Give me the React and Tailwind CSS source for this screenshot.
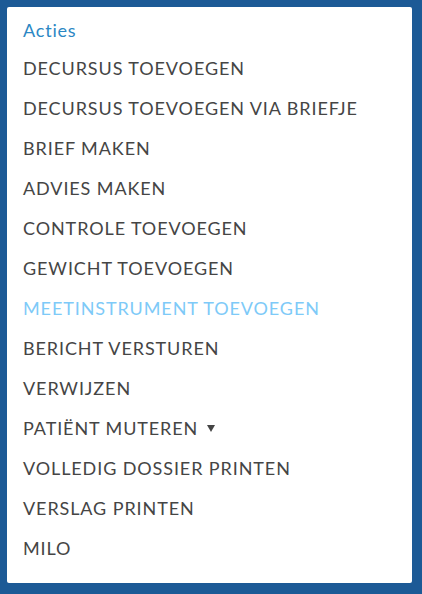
const items = [
  "DECURSUS TOEVOEGEN",
  "DECURSUS TOEVOEGEN VIA BRIEFJE",
  "BRIEF MAKEN",
  "ADVIES MAKEN",
  "CONTROLE TOEVOEGEN",
  "GEWICHT TOEVOEGEN",
  "MEETINSTRUMENT TOEVOEGEN",
  "BERICHT VERSTUREN",
  "VERWIJZEN",
  "PATIËNT MUTEREN",
  "VOLLEDIG DOSSIER PRINTEN",
  "VERSLAG PRINTEN",
  "MILO",
];

export default function App() {
  return (
    <div className="w-[422px] h-[594px] bg-[#1c5a96] pt-[7px] pl-[7px] font-['Lato',sans-serif]">
      <div className="w-[405px] h-[576px] bg-white rounded-[2px] pt-[11px] pl-[16px]">
        <div className="h-[24px] leading-[24px] text-[18px] tracking-[0.8px] text-[#2b87c4]">Acties</div>
        <ul className="mt-[6px]">
          {items.map((label) => (
            <li
              key={label}
              className={
                "h-10 flex items-center text-[18px] tracking-[0.9px] " +
                (label === "MEETINSTRUMENT TOEVOEGEN" ? "text-[#7ecaf8]" : "text-[#454545]")
              }
            >
              {label}
              {label === "PATIËNT MUTEREN" && (
                <svg className="ml-[9px]" width="8" height="7" viewBox="0 0 8 7">
                  <path d="M0 0H8L4 7Z" fill="#454545" />
                </svg>
              )}
            </li>
          ))}
        </ul>
      </div>
    </div>
  );
}
